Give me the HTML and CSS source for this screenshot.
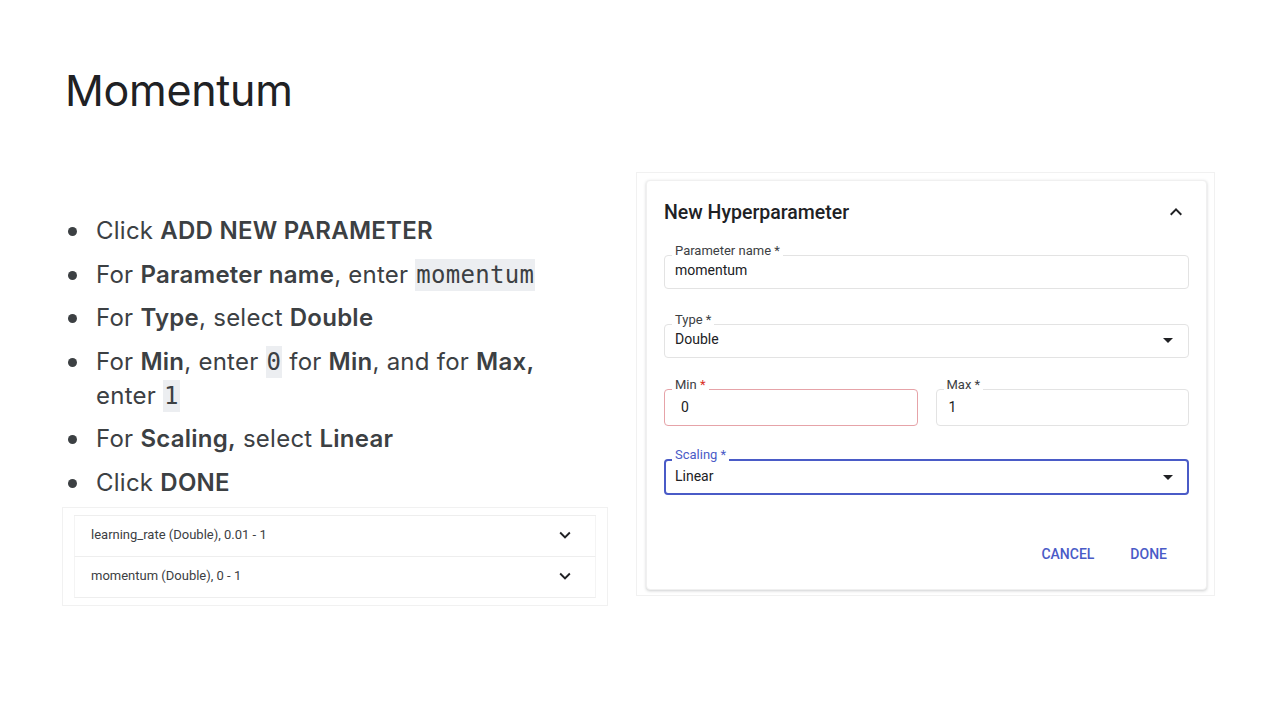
FILE: index.html
```html
<!DOCTYPE html>
<html>
<head>
<meta charset="utf-8">
<link rel="stylesheet" href="styles.css">
</head>
<body>
<div class="slide">
  <h1 class="title">Momentum</h1>
  <div class="content">
    <div class="left">
      <ul class="steps">
        <li>Click <b>ADD NEW PARAMETER</b></li>
        <li>For <b>Parameter name</b>, enter <code>momentum</code></li>
        <li>For <b>Type</b>, select <b>Double</b></li>
        <li>For <b>Min</b>, enter <code>0</code> for <b>Min</b>, and for <b>Max,</b> enter <code>1</code></li>
        <li>For <b>Scaling,</b> select <b>Linear</b></li>
        <li>Click <b>DONE</b></li>
      </ul>
      <div class="shot list-shot">
        <div class="plist">
          <div class="prow"><span>learning_rate (Double), 0.01 - 1</span>
            <svg class="chev" viewBox="0 0 24 24"><path d="M7.41 8.59 12 13.17l4.59-4.58L18 10l-6 6-6-6z"/></svg></div>
          <div class="prow"><span>momentum (Double), 0 - 1</span>
            <svg class="chev" viewBox="0 0 24 24"><path d="M7.41 8.59 12 13.17l4.59-4.58L18 10l-6 6-6-6z"/></svg></div>
        </div>
      </div>
    </div>
    <div class="shot dialog-shot">
      <div class="card">
        <div class="card-head">
          <span class="card-title">New Hyperparameter</span>
          <svg class="chev up" viewBox="0 0 24 24"><path d="M7.41 15.41 12 10.83l4.59 4.58L18 14l-6-6-6 6z"/></svg>
        </div>
        <div class="field">
          <label>Parameter name *</label>
          <div class="value">momentum</div>
        </div>
        <div class="field type">
          <label>Type *</label>
          <div class="value">Double</div>
          <span class="caret"></span>
        </div>
        <div class="field-row">
          <div class="field error">
            <label>Min <em>*</em></label>
            <div class="value">0</div>
          </div>
          <div class="field">
            <label>Max *</label>
            <div class="value">1</div>
          </div>
        </div>
        <div class="field focused">
          <label>Scaling *</label>
          <div class="value">Linear</div>
          <span class="caret"></span>
        </div>
        <div class="actions">
          <button class="btn">CANCEL</button>
          <button class="btn">DONE</button>
        </div>
      </div>
    </div>
  </div>
</div>
</body>
</html>
```

FILE: styles.css
```css
* { box-sizing: border-box; }
html, body { margin: 0; padding: 0; background: #fff; }
.slide {
  width: 1280px;
  height: 720px;
  padding: 62px 0 0 65px;
  font-family: "Inter", "Roboto", sans-serif;
  color: #3c4043;
}
.title {
  margin: 0;
  font-family: "Inter", sans-serif;
  font-weight: 400;
  font-size: 43px;
  line-height: 56px;
  letter-spacing: -0.3px;
  color: #202124;
}
.content {
  display: flex;
  align-items: flex-start;
  margin-top: 54px;
}
.left {
  width: 569px;
  display: flex;
  flex-direction: column;
  margin-left: -3px;
  padding-top: 42px;
}
.steps {
  list-style: none;
  margin: 0;
  padding: 0 0 0 34px;
  width: 508px;
}
.steps li {
  position: relative;
  font-size: 24px;
  line-height: 34px;
  margin-bottom: 9.5px;
  letter-spacing: 0.25px;
  color: #3c4043;
}
.steps li:last-child { margin-bottom: 7px; }
.steps li::before {
  content: "";
  position: absolute;
  left: -28px;
  top: 13px;
  width: 9px;
  height: 9px;
  border-radius: 50%;
  background: #3c4043;
}
.steps b { font-weight: 600; color: #3c4043; }
.steps code {
  font-family: "DejaVu Sans Mono", "Liberation Mono", monospace;
  font-size: 24px;
  letter-spacing: 0.3px;
  background: #eceef1;
  padding: 2px 1px;
  color: #3c4043;
}
.shot {
  border: 1px solid #f1f1f1;
  background: #fff;
}
.list-shot {
  width: 546px;
  height: 99px;
  padding: 7px 11px 0 11px;
}
.plist {
  border-top: 1px solid #eeeeee;
  font-family: "Roboto", sans-serif;
  font-size: 13px;
  color: #3c4043;
}
.prow {
  display: flex;
  align-items: center;
  justify-content: space-between;
  height: 41px;
  padding: 0 19px 2px 16px;
  border-bottom: 1px solid #eeeeee;
  border-left: 1px solid #f4f4f4;
  border-right: 1px solid #f4f4f4;
}
.chev { width: 22px; height: 22px; fill: #202124; }
.dialog-shot {
  margin-left: 5px;
  width: 579px;
  height: 424px;
  padding: 7px 7px 0 9px;
}
.card {
  background: #fff;
  height: 410px;
  border-radius: 4px;
  border: 1px solid #f0f0f0;
  box-shadow: 0 1px 3px rgba(60,64,67,0.25);
  padding: 18px 17px 0 17px;
  font-family: "Roboto", sans-serif;
}
.card-head {
  display: flex;
  align-items: center;
  justify-content: space-between;
  height: 26px;
  margin-bottom: 30px;
}
.card-title {
  font-size: 19.5px;
  font-weight: 500;
  color: #202124;
}
.chev.up { width: 24px; height: 24px; margin-right: 1px; }
.field {
  position: relative;
  height: 34px;
  border: 1px solid #e3e3e3;
  border-radius: 4px;
  margin-bottom: 35px;
}
.field.type { margin-bottom: 31px; }
.field label {
  position: absolute;
  left: 7px;
  top: -12px;
  padding: 0 3px;
  background: #fff;
  font-size: 13px;
  line-height: 14px;
  color: #3c4043;
}
.field label em { font-style: normal; color: #d93025; }
.field .value {
  padding: 7px 10px 0 10px;
  font-size: 14px;
  line-height: 15px;
  color: #202124;
}
.caret {
  position: absolute;
  right: 15px;
  top: 13px;
  width: 0;
  height: 0;
  border-left: 5px solid transparent;
  border-right: 5px solid transparent;
  border-top: 5px solid #202124;
}
.field-row {
  display: flex;
  gap: 18px;
}
.field-row .field { flex: 1; height: 37px; margin-bottom: 33px; }
.field-row .field .value { padding-top: 10px; padding-left: 16px; }
.field-row .field:last-child .value { padding-left: 12px; }
.field.error { border-color: #e6a3a8; }
.field.focused {
  border: 2px solid #4a5bc7;
  height: 36px;
}
.field.focused label { color: #4a5bc7; top: -13px; left: 6px; }
.field.focused .value { padding-top: 8px; padding-left: 9px; }
.field.focused .caret { right: 14px; top: 14px; }
.actions {
  display: flex;
  justify-content: flex-end;
  gap: 4px;
  margin-top: 41px;
  padding-right: 6px;
}
.btn {
  border: 0;
  background: transparent;
  font-family: "Roboto", sans-serif;
  font-size: 14px;
  font-weight: 500;
  color: #4a5bc7;
  padding: 0 16px;
  height: 36px;
}
```
